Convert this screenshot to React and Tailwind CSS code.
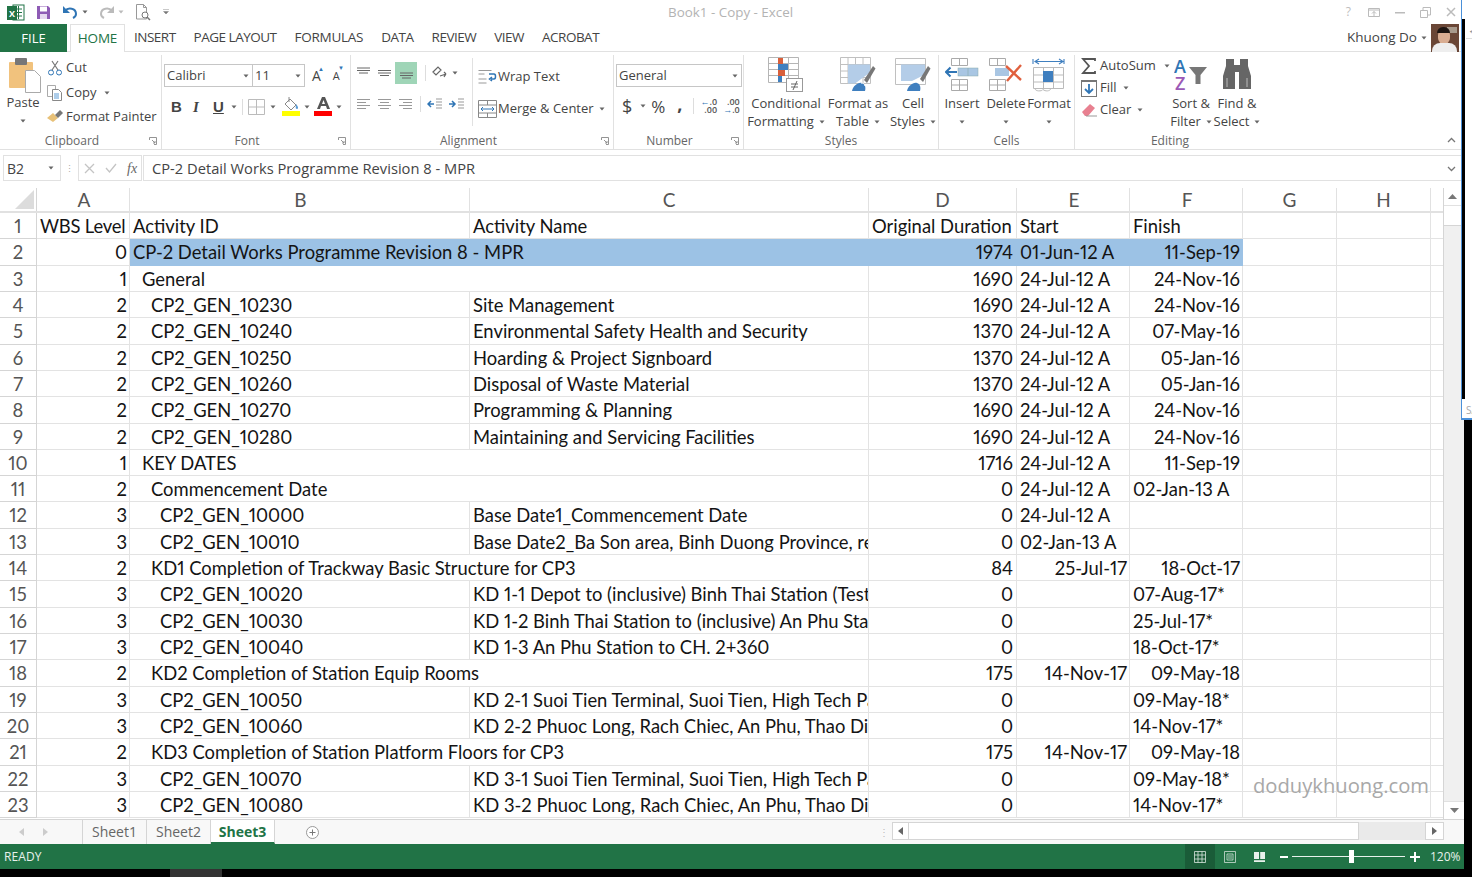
import React from "react";

const ui = { fontFamily: '"Open Sans","Noto Sans",sans-serif' };
const cellFont = { fontFamily: '"Lato","Noto Sans",sans-serif', fontVariantNumeric: "proportional-nums" };

const data = [
  [0, 0, "CP-2 Detail Works Programme Revision 8 - MPR", "", "1974", "01-Jun-12 A", "11-Sep-19"],
  [1, 1, "General", "", "1690", "24-Jul-12 A", "24-Nov-16"],
  [2, 2, "CP2_GEN_10230", "Site Management", "1690", "24-Jul-12 A", "24-Nov-16"],
  [2, 2, "CP2_GEN_10240", "Environmental Safety Health and Security", "1370", "24-Jul-12 A", "07-May-16"],
  [2, 2, "CP2_GEN_10250", "Hoarding & Project Signboard", "1370", "24-Jul-12 A", "05-Jan-16"],
  [2, 2, "CP2_GEN_10260", "Disposal of Waste Material", "1370", "24-Jul-12 A", "05-Jan-16"],
  [2, 2, "CP2_GEN_10270", "Programming & Planning", "1690", "24-Jul-12 A", "24-Nov-16"],
  [2, 2, "CP2_GEN_10280", "Maintaining and Servicing Facilities", "1690", "24-Jul-12 A", "24-Nov-16"],
  [1, 1, "KEY DATES", "", "1716", "24-Jul-12 A", "11-Sep-19"],
  [2, 2, "Commencement Date", "", "0", "24-Jul-12 A", "02-Jan-13 A"],
  [3, 3, "CP2_GEN_10000", "Base Date1_Commencement Date", "0", "24-Jul-12 A", ""],
  [3, 3, "CP2_GEN_10010", "Base Date2_Ba Son area, Binh Duong Province, re", "0", "02-Jan-13 A", ""],
  [2, 2, "KD1 Completion of Trackway Basic Structure for CP3", "", "84", "25-Jul-17", "18-Oct-17"],
  [3, 3, "CP2_GEN_10020", "KD 1-1 Depot to (inclusive) Binh Thai Station (Test", "0", "", "07-Aug-17*"],
  [3, 3, "CP2_GEN_10030", "KD 1-2 Binh Thai Station to (inclusive) An Phu Station", "0", "", "25-Jul-17*"],
  [3, 3, "CP2_GEN_10040", "KD 1-3 An Phu Station to CH. 2+360", "0", "", "18-Oct-17*"],
  [2, 2, "KD2 Completion of Station Equip Rooms", "", "175", "14-Nov-17", "09-May-18"],
  [3, 3, "CP2_GEN_10050", "KD 2-1 Suoi Tien Terminal, Suoi Tien, High Tech Park", "0", "", "09-May-18*"],
  [3, 3, "CP2_GEN_10060", "KD 2-2 Phuoc Long, Rach Chiec, An Phu, Thao Dien", "0", "", "14-Nov-17*"],
  [2, 2, "KD3 Completion of Station Platform Floors for CP3", "", "175", "14-Nov-17", "09-May-18"],
  [3, 3, "CP2_GEN_10070", "KD 3-1 Suoi Tien Terminal, Suoi Tien, High Tech Park", "0", "", "09-May-18*"],
  [3, 3, "CP2_GEN_10080", "KD 3-2 Phuoc Long, Rach Chiec, An Phu, Thao Dien", "0", "", "14-Nov-17*"],
];

const Caret = ({ className = "" }) => (
  <svg width="6" height="4" viewBox="0 0 6 4" className={className}><path d="M0.5 0.5h5L3 3.5z" fill="#666" /></svg>
);
const Launcher = () => (
  <svg width="8" height="8" viewBox="0 0 8 8" className="absolute right-[4px] bottom-[5px]"><path d="M0.5 3V.5H7.5V7.5H5M3 3l3 3M6 4v2H4" fill="none" stroke="#888" strokeWidth="0.9" /></svg>
);

function Group({ w, label, children, last, shift = "" }) {
  return (
    <div className={`relative flex flex-col shrink-0 h-[95px] mt-[3px] ${last ? "" : "border-r border-[#e1e1e1]"}`} style={{ width: w }}>
      <div className="relative flex-1 min-h-0">{children}</div>
      <div className={`text-center text-[12px] leading-[16px] text-[#666] pb-[1px] ${shift}`}>{label}</div>
    </div>
  );
}

function Big({ w, icon, l1, l2, caret = true }) {
  return (
    <div className="flex flex-col items-center shrink-0" style={{ width: w }}>
      <div className="h-[39px] flex items-center justify-center">{icon}</div>
      <div className="text-[13px] leading-[18px] text-[#444] whitespace-nowrap">{l1}</div>
      <div className="text-[13px] leading-[19px] text-[#444] whitespace-nowrap flex items-center gap-[5px] h-[19px]">{l2}{caret && <Caret />}</div>
    </div>
  );
}

const FormatTableIcon = () => (
  <svg width="36" height="35" viewBox="0 0 36 35">
    <path d="M.5 .5h30v26H.5zM.5 7.500h30M.5 14h30M.5 20.500h30M8 .5v26M15.500 .5v26M23 .5v26" fill="none" stroke="#c0c0c0" />
    <path d="M8 7.500h22v8L15 26.500H8z" fill="#b4cde8" />
    <path d="M24 23L33 9l2.500 2.500L27 26z" fill="#777" />
    <path d="M12 34c1-5 6-9 10-8 3 1 4 4 3 8z" fill="#3f7fbf" />
    <path d="M21 26c2 0 4 1 4 3" fill="none" stroke="#fff" />
  </svg>
);
const CellStyleIcon = () => (
  <svg width="36" height="34" viewBox="0 0 36 34">
    <path d="M.5 .5h30v26H.5zM.5 6.500h30" fill="none" stroke="#c0c0c0" />
    <path d="M6 6.500h24v10L17 23H6z" fill="#b4cde8" />
    <path d="M25 21L33 8l2.500 2.500L28 24z" fill="#777" />
    <path d="M12 33c1-5 6-9 10-8 3 1 4 4 3 8z" fill="#3f7fbf" />
  </svg>
);

const CondIcon = () => (
  <svg width="36" height="36" viewBox="0 0 36 36">
    <path d="M.5 .5h30v25h-30zM.5 6.500h30M.5 12.500h30M.5 18.500h30M10.500 .5v25M20.500 .5v25" fill="none" stroke="#b5b5b5" />
    <rect x="10" y="1" width="5" height="6" fill="#d9603c" />
    <rect x="10" y="7" width="10" height="6" fill="#3f7fbf" />
    <rect x="10" y="13" width="7" height="6" fill="#d9603c" />
    <rect x="10" y="19" width="4" height="6" fill="#3f7fbf" />
    <rect x="18.500" y="21.500" width="16" height="13" fill="#fff" stroke="#999" />
    <path d="M23 27h7M23 30h7M29 24l-4 9" stroke="#666" fill="none" />
  </svg>
);

const InsertIcon = () => (
  <svg width="34" height="34" viewBox="0 0 34 34">
    <path d="M6.500 .5h16v7h-16zM14.500 .5v7M6.500 21.500h16v11h-16zM6.500 27h16M14.500 21.500v11" fill="none" stroke="#aaa" />
    <rect x="13" y="10" width="20" height="8" fill="#a9c6e3" stroke="#8aa" strokeWidth=".5" />
    <path d="M23 10v8" stroke="#8aa" strokeWidth=".6" />
    <path d="M1 14h11M5.500 9.500L1 14l4.500 4.500" fill="none" stroke="#2f75b5" strokeWidth="2" />
  </svg>
);
const DeleteIcon = () => (
  <svg width="34" height="34" viewBox="0 0 34 34">
    <path d="M.5 .5h16v7h-16zM8.500 .5v7M.5 21.500h16v11h-16zM.5 27h16M8.500 21.500v11" fill="none" stroke="#aaa" />
    <rect x="6" y="10" width="14" height="8" fill="#a9c6e3" />
    <path d="M17 8l15 14M32 7L18 23" stroke="#e0603e" strokeWidth="2.400" fill="none" />
  </svg>
);
const FormatIcon = () => (
  <svg width="34" height="36" viewBox="0 0 34 36">
    <path d="M1 2v5M32 2v5M3 4.500h28M7 2L3 4.500 7 7M27 2l4 2.500L27 7" fill="none" stroke="#3f7fbf" strokeWidth="1.100" />
    <path d="M1.500 10.500h30v21h-30zM1.500 18h30M1.500 25h30M11.500 10.500v21M21.500 10.500v21" fill="none" stroke="#bbb" />
    <rect x="11" y="14" width="10" height="11" fill="#3f7fbf" />
    <path d="M3 31.500c0 3 7 3 8 1 2 2 7 2 8-1" fill="none" stroke="#bbb" />
  </svg>
);

function Row({ n, cells, selected }) {
  const [a, indent, b, c, d, e, f] = cells;
  const pad = ["pl-[3px]", "pl-[12px]", "pl-[21px]", "pl-[30px]"][indent];
  const eRight = e && !e.endsWith("A");
  const fLeft = f.endsWith("A") || f.endsWith("*");
  const sel = selected ? "bg-[#9cc2e5]" : "";
  const line = selected ? "border-[#9cc2e5]" : "border-[#e3e3e3]";
  return (
    <div className="flex h-[26.32px] text-[18.4px] leading-[26px] text-[#141414]" style={cellFont}>
      <div className="w-[37px] shrink-0 text-center text-[#555] border-r border-b border-[#d5d5d5] bg-[#fff]">{n}</div>
      <div className="w-[93px] shrink-0 text-right pr-[2px] border-r border-b border-[#e3e3e3]">{a}</div>
      <div className={`w-[340px] shrink-0 relative border-b whitespace-nowrap ${c ? "border-r" : ""} ${line} ${sel} ${pad}`}>
        <span className="relative z-10">{b}</span>
      </div>
      <div className={`w-[399px] shrink-0 overflow-hidden whitespace-nowrap pl-[3px] border-r border-b ${line} ${sel}`}>{c}</div>
      <div className={`w-[148px] shrink-0 text-right pr-[3px] border-r border-b ${line} ${sel}`}>{d}</div>
      <div className={`w-[113px] shrink-0 whitespace-nowrap border-r border-b ${line} ${sel} ${eRight ? "text-right pr-[2px]" : "pl-[3px]"}`}>{e}</div>
      <div className={`w-[113px] shrink-0 whitespace-nowrap border-r border-b ${line} ${sel} ${fLeft ? "pl-[3px]" : "text-right pr-[2px]"}`}>{f}</div>
      <div className="w-[94px] shrink-0 border-r border-b border-[#e3e3e3]" />
      <div className="w-[94px] shrink-0 border-r border-b border-[#e3e3e3]" />
      <div className="w-[12px] shrink-0 border-b border-[#e3e3e3]" />
    </div>
  );
}

function Header1() {
  return (
    <div className="flex h-[26.32px] text-[18.4px] leading-[26px] text-[#141414]" style={cellFont}>
      <div className="w-[37px] shrink-0 text-center text-[#555] border-r border-b border-[#d5d5d5]">1</div>
      <div className="w-[93px] shrink-0 pl-[3px] whitespace-nowrap tracking-[-0.2px] border-r border-b border-[#e3e3e3]">WBS Level</div>
      <div className="w-[340px] shrink-0 pl-[3px] border-r border-b border-[#e3e3e3]">Activity ID</div>
      <div className="w-[399px] shrink-0 pl-[3px] border-r border-b border-[#e3e3e3]">Activity Name</div>
      <div className="w-[148px] shrink-0 pl-[3px] whitespace-nowrap border-r border-b border-[#e3e3e3]">Original Duration</div>
      <div className="w-[113px] shrink-0 pl-[3px] border-r border-b border-[#e3e3e3]">Start</div>
      <div className="w-[113px] shrink-0 pl-[3px] border-r border-b border-[#e3e3e3]">Finish</div>
      <div className="w-[94px] shrink-0 border-r border-b border-[#e3e3e3]" />
      <div className="w-[94px] shrink-0 border-r border-b border-[#e3e3e3]" />
      <div className="w-[12px] shrink-0 border-b border-[#e3e3e3]" />
    </div>
  );
}

function ColHead({ w, t, nudge }) {
  return <div className={`shrink-0 text-center text-[19px] leading-[24px] text-[#555] border-r border-[#e1e1e1] ${nudge ? "pl-[2px]" : ""}`} style={{ width: w }}>{t}</div>;
}

function Lines({ kind }) {
  const ys = kind === "top" ? [1, 3.5, 6] : kind === "mid" ? [3.5, 6, 8.5] : [6, 8.5, 11];
  return (
    <svg width="15" height="13" viewBox="0 0 15 13" className="shrink-0">
      <path d={`M1 ${ys[0]}h13M1 ${ys[1]}h13M3 ${ys[2]}h9`} stroke="#666" />
    </svg>
  );
}
function HLines({ a }) {
  const x = a === "left" ? 1 : a === "center" ? 3 : 5;
  return (
    <svg width="15" height="13" viewBox="0 0 15 13" className="shrink-0">
      <path d={`M1 1.5h13M${x} 4.5h9M1 7.5h13M${x} 10.5h9`} stroke="#999" />
    </svg>
  );
}

export default function App() {
  return (
    <div className="w-[1472px] h-[877px] overflow-hidden bg-black relative" style={ui}>
      <div className="w-[1464px] h-[869px] bg-white flex flex-col">
        {/* title bar */}
        <div className="h-[24px] relative flex items-center shrink-0">
          <div className="flex items-center pl-[6px] gap-[11px]">
            <svg width="19" height="19" viewBox="0 0 19 19"><rect x="7" y="2" width="11" height="15" fill="#fff" stroke="#217346" /><path d="M9 6h7M9 9.500h7M9 13h7M12.500 3v13" stroke="#217346" /><rect x="1" y="3" width="10" height="14" fill="#217346" /><text x="3" y="14" fontSize="9" fontWeight="700" fill="#fff" fontFamily="Open Sans">X</text></svg>
            <svg width="15" height="15" viewBox="0 0 15 15"><path d="M1 1h11l2 2v11H1z" fill="#8e5bb5" /><rect x="4" y="1.500" width="7" height="5" fill="#fff" /><rect x="4" y="9" width="7" height="5" fill="#e6d8f0" /></svg>
            <div className="flex items-center gap-[3px]">
              <svg width="16" height="15" viewBox="0 0 16 15"><path d="M3 6c3-4 11-3 11 3 0 2-1 3-3 4" fill="none" stroke="#2f75b5" strokeWidth="2" /><path d="M1 1v7h7z" fill="#2f75b5" /></svg>
              <Caret className="ml-[1px]" />
            </div>
            <div className="flex items-center gap-[3px]">
              <svg width="16" height="15" viewBox="0 0 16 15"><path d="M13 6C10 2 2 3 2 9c0 2 1 3 3 4" fill="none" stroke="#bbb" strokeWidth="2" /><path d="M15 1v7H8z" fill="#bbb" /></svg>
              <svg width="6" height="4" viewBox="0 0 6 4"><path d="M.5.5h5L3 3.500z" fill="#bbb" /></svg>
            </div>
            <svg width="17" height="18" viewBox="0 0 17 18"><path d="M1.500 1.500h7l3 3V16h-10zM8.500 1.500v3h3" fill="none" stroke="#999" /><circle cx="10" cy="12" r="3" fill="#fff" stroke="#777" /><path d="M12 14l3 3" stroke="#777" strokeWidth="1.500" /></svg>
            <svg width="6" height="6" viewBox="0 0 6 6"><path d="M0 .5h6M.5 2.500h5L3 5z" fill="#777" stroke="#777" strokeWidth=".4" /></svg>
          </div>
          <div className="absolute left-[668px] top-[3px] text-[13.400px] leading-[18px] text-[#b3b3b3] whitespace-nowrap">Book1 - Copy - Excel</div>
          <div className="ml-auto flex items-center gap-[15px] pr-[8px]">
            <span className="text-[12px] leading-none text-[#bdbdbd] mr-[2px]">?</span>
            <svg width="12" height="9" viewBox="0 0 12 9"><path d="M.5.5h11v8H.5zM.5 2h11M6 8V3.500M4 5.500l2-2 2 2" fill="none" stroke="#bbb" /></svg>
            <svg width="10" height="3" viewBox="0 0 10 3"><rect y="1" width="10" height="1.500" fill="#bbb" /></svg>
            <svg width="11" height="11" viewBox="0 0 11 11"><path d="M.5 3.500h7v7h-7zM3 3V.5h7.500V8H8" fill="none" stroke="#bbb" /></svg>
            <svg width="10" height="10" viewBox="0 0 10 10"><path d="M1 1l8 8M9 1l-8 8" stroke="#bbb" strokeWidth="1.500" /></svg>
          </div>
        </div>
        {/* tabs */}
        <div className="h-[28px] flex items-center shrink-0 border-b border-[#e1e1e1] relative text-[13.500px] text-[#444]">
          <div className="w-[67px] h-[28px] bg-[#217346] text-white text-center leading-[28px] text-[13px] shrink-0">FILE</div>
          <div className="w-[55px] h-[28px] ml-[3px] border-x border-t border-[#e1e1e1] bg-white text-[#217346] text-center leading-[27px] z-10 shrink-0 whitespace-nowrap tracking-[-0.2px]">HOME</div>
          <div className="flex items-center gap-[18px] pl-[9px] tracking-[-0.5px] whitespace-nowrap">
            <span>INSERT</span><span>PAGE LAYOUT</span><span className="tracking-[-0.25px]">FORMULAS</span><span>DATA</span><span>REVIEW</span><span>VIEW</span><span>ACROBAT</span>
          </div>
          <div className="ml-auto flex items-center gap-[4px] text-[13.500px] h-full pr-[5px]">
            <span>Khuong Do</span><Caret />
            <div className="w-[28px] h-[28px] bg-[#6a4636] overflow-hidden relative">
              <div className="absolute left-[16px] top-[3px] w-[10px] h-[6px] bg-[#a89a8c]" />
              <div className="absolute left-[7px] top-[5px] w-[12px] h-[15px] rounded-full bg-[#d9ad92]" />
              <div className="absolute left-[6px] top-[3px] w-[13px] h-[6px] rounded-t-full bg-[#1d1512]" />
              <div className="absolute left-[1px] top-[19px] w-[25px] h-[10px] rounded-t-lg bg-[#eeeeee]" />
            </div>
          </div>
        </div>
        {/* ribbon */}
        <div className="h-[98px] flex shrink-0 border-b border-[#e1e1e1] relative text-[#444]">
          <Group w={162} shift="pr-[17px]" label={<span>Clipboard<Launcher /></span>}>
            <div className="flex h-full">
              <div className="w-[46px] flex flex-col items-center shrink-0">
                <svg width="33" height="36" viewBox="0 0 33 36" className="mt-[2px] ml-[3px]"><rect x="1" y="5" width="24" height="26" rx="1" fill="#f1c27d" /><rect x="7" y="1" width="12" height="7" rx="1" fill="#777" /><path d="M17.500 13.500h9l6 6v16h-15z" fill="#fff" stroke="#aaa" /></svg>
                <div className="text-[13px] leading-[18px]">Paste</div>
                <Caret className="mt-[8px]" />
              </div>
              <div className="flex flex-col text-[13px] pl-[1px]">
                <div className="h-[25px] flex items-center gap-[3px]">
                  <svg width="16" height="16" viewBox="0 0 16 16"><circle cx="4" cy="12.500" r="2.500" fill="none" stroke="#2f75b5" /><circle cx="12" cy="12.500" r="2.500" fill="none" stroke="#2f75b5" /><path d="M5 10L11 1M11 10L5 1" stroke="#777" strokeWidth="1.200" /></svg>
                  <span>Cut</span>
                </div>
                <div className="h-[25px] flex items-center gap-[3px]">
                  <svg width="16" height="16" viewBox="0 0 16 16"><path d="M.5.5h8v11h-8z" fill="#fff" stroke="#aaa" /><path d="M5.500 4.500h6l3 3v8h-9z" fill="#fff" stroke="#888" /><path d="M7 9h5M7 11h5M7 13h5" stroke="#5b9bd5" /></svg>
                  <span>Copy</span><Caret className="ml-[5px]" />
                </div>
                <div className="h-[24px] flex items-center gap-[3px]">
                  <svg width="16" height="14" viewBox="0 0 16 14"><path d="M0 8l6-5 5 5-5 4z" fill="#e8c178" /><path d="M8 5l5-5 3 3-5 5z" fill="#777" /></svg>
                  <span className="whitespace-nowrap">Format Painter</span>
                </div>
              </div>
            </div>
          </Group>
          <Group w={189} shift="pr-[18px]" label={<span>Font<Launcher /></span>}>
            <div className="pl-[2px] pt-[9px]">
              <div className="flex items-center">
                <div className="w-[89px] h-[23px] border border-[#c6c6c6] flex items-center justify-between px-[2px] text-[13px] shrink-0"><span>Calibri</span><Caret className="mr-[1px]" /></div>
                <div className="w-[52px] h-[23px] border border-l-0 border-[#c6c6c6] flex items-center justify-between px-[2px] text-[13px] shrink-0"><span>11</span><Caret className="mr-[1px]" /></div>
                <span className="ml-[7px] text-[14px] leading-none relative">A<span className="absolute -top-[3px] -right-[3px] text-[#2f75b5] text-[6px]">▲</span></span>
                <span className="ml-[12px] text-[11px] leading-none relative">A<span className="absolute -top-[5px] -right-[4px] text-[#2f75b5] text-[6px]">▼</span></span>
              </div>
              <div className="flex items-center mt-[10px] pl-[7px] h-[20px]">
                <span className="text-[15px] font-bold w-[22px]" style={{ fontFamily: '"Liberation Sans",sans-serif' }}>B</span>
                <span className="text-[15px] italic font-bold w-[20px]" style={{ fontFamily: '"Liberation Serif",serif' }}>I</span>
                <span className="text-[15px] font-bold underline w-[16px]" style={{ fontFamily: '"Liberation Sans",sans-serif' }}>U</span>
                <Caret className="ml-[2px]" />
                <div className="w-[1px] h-[16px] bg-[#ddd] ml-[5px] mr-[5px]" />
                <svg width="17" height="16" viewBox="0 0 17 16"><path d="M.5.5h16v15H.5zM8.500.5v15M.5 8h16" fill="none" stroke="#bbb" /></svg>
                <Caret className="ml-[5px] mr-[6px]" />
                <svg width="19" height="20" viewBox="0 0 19 20"><path d="M3 7l5-5 6 6-5 5zM7 0v5" fill="#fff" stroke="#888" /><path d="M14 7c2 2 3 5 1 5s-1-3-1-5" fill="#5b9bd5" /><rect y="14" width="18" height="5" fill="#ffff00" /></svg>
                <Caret className="ml-[3px] mr-[4px]" />
                <svg width="19" height="20" viewBox="0 0 19 20"><path d="M3 12L8 0h3l5 12h-3l-1-3H7l-1 3zM8 7h3L9.500 3z" fill="#555" fillRule="evenodd" /><rect y="14" width="18" height="5" fill="#ff0000" /></svg>
                <Caret className="ml-[3px]" />
              </div>
            </div>
          </Group>
          <Group w={263} shift="pr-[27px]" label={<span>Alignment<Launcher /></span>}>
            <div className="flex h-full">
              <div className="w-[121px] shrink-0 pl-[5px] pt-[7px]">
                <div className="flex items-center gap-[6px] h-[22px]">
                  <Lines kind="top" /><Lines kind="mid" />
                  <div className="w-[22px] h-[22px] bg-[#9fd5b7] flex items-center justify-center -ml-[3px] shrink-0"><Lines kind="bot" /></div>
                  <div className="w-[1px] h-[16px] bg-[#ddd] ml-[2px] shrink-0" />
                  <svg width="15" height="15" viewBox="0 0 15 15" className="shrink-0"><path d="M1 6l5-5 3 3-5 5zM8 10l6-2M14 8l-2-2M14 8l-2 3" fill="none" stroke="#666" strokeWidth="1.200" /></svg>
                  <Caret className="-ml-[1px]" />
                </div>
                <div className="flex items-center gap-[6px] h-[22px] mt-[9px]">
                  <HLines a="left" /><HLines a="center" /><HLines a="right" />
                  <div className="w-[1px] h-[16px] bg-[#ddd] ml-[1px] shrink-0" />
                  <svg width="16" height="12" viewBox="0 0 16 12" className="shrink-0"><path d="M1 6h6M4 3L1 6l3 3" fill="none" stroke="#2f75b5" strokeWidth="1.500" /><path d="M9 1h6M9 4h6M9 7h6M9 10h6" stroke="#999" /></svg>
                  <svg width="16" height="12" viewBox="0 0 16 12" className="shrink-0"><path d="M0 6h6M3 3l3 3-3 3" fill="none" stroke="#2f75b5" strokeWidth="1.500" /><path d="M9 1h6M9 4h6M9 7h6M9 10h6" stroke="#999" /></svg>
                </div>
              </div>
              <div className="w-[1px] h-[68px] bg-[#e1e1e1] mt-[3px] shrink-0" />
              <div className="flex flex-col pl-[5px] pt-[10px] text-[13px]">
                <div className="h-[24px] flex items-center whitespace-nowrap">
                  <svg width="20" height="16" viewBox="0 0 20 16"><path d="M.5 1.500h13M.5 5h6M.5 10h8M.5 14h8" stroke="#999" fill="none" /><path d="M11 5h5c2 0 2 5 0 5h-3M14 8l-2.500 2 2.500 2" fill="none" stroke="#2f75b5" strokeWidth="1.500" /></svg>
                  <span>Wrap Text</span>
                </div>
                <div className="h-[24px] mt-[8px] flex items-center whitespace-nowrap">
                  <svg width="20" height="18" viewBox="0 0 20 18"><path d="M.5.5h18v17H.5zM.5 5h18M.5 13h18M9.500.5V5M9.500 13v4" fill="none" stroke="#888" /><path d="M3 9h13M5 7L3 9l2 2M14 7l2 2-2 2" fill="none" stroke="#2f75b5" /></svg>
                  <span>Merge &amp; Center</span><Caret className="ml-[5px]" />
                </div>
              </div>
            </div>
          </Group>
          <Group w={130} shift="pr-[18px]" label={<span>Number<Launcher /></span>}>
            <div className="pl-[2px] pt-[9px]">
              <div className="w-[126px] h-[23px] border border-[#c6c6c6] flex items-center justify-between px-[2px] text-[13px]"><span>General</span><Caret className="mr-[1px]" /></div>
              <div className="flex items-center mt-[7px] pl-[6px] h-[24px]">
                <span className="text-[18px] leading-none">$</span><Caret className="ml-[8px]" />
                <span className="text-[17px] leading-none ml-[5px]">%</span>
                <span className="text-[18px] font-bold leading-none ml-[12px] -mt-[5px]">,</span>
                <div className="w-[1px] h-[16px] bg-[#ddd] ml-[10px]" />
                <div className="relative ml-[7px] text-[9px] leading-[8px] text-[#555] font-semibold text-right"><span className="text-[#2f75b5]">←</span>.0<br />.00</div>
                <div className="relative ml-[6px] text-[9px] leading-[8px] text-[#555] font-semibold text-right">.00<br /><span className="text-[#2f75b5]">→</span>.0</div>
              </div>
            </div>
          </Group>
          <Group w={195} label="Styles">
            <div className="flex">
              <Big w={84} icon={<CondIcon />} l1="Conditional" l2="Formatting" />
              <Big w={60} icon={<FormatTableIcon />} l1="Format as" l2="Table" />
              <Big w={50} icon={<CellStyleIcon />} l1="Cell" l2="Styles" />
            </div>
          </Group>
          <Group w={136} label="Cells">
            <div className="flex">
              <Big w={46} icon={<InsertIcon />} l1="Insert" l2="" />
              <Big w={42} icon={<DeleteIcon />} l1="Delete" l2="" />
              <Big w={44} icon={<FormatIcon />} l1="Format" l2="" />
            </div>
          </Group>
          <Group w={190} last label="Editing">
            <div className="flex h-full">
              <div className="flex flex-col text-[13px] pl-[6px] w-[95px] shrink-0 whitespace-nowrap">
                <div className="h-[22px] flex items-center gap-[3px]">
                  <svg width="16" height="16" viewBox="0 0 16 16"><path d="M14 3V1H2l6 7-6 7h12v-2" fill="none" stroke="#555" strokeWidth="1.800" /></svg>
                  <span>AutoSum</span><Caret className="ml-[5px]" />
                </div>
                <div className="h-[22px] flex items-center gap-[3px]">
                  <svg width="16" height="17" viewBox="0 0 16 17"><rect x=".5" y=".5" width="15" height="16" fill="#fff" stroke="#777" /><rect y="0" width="16" height="2" fill="#777" /><path d="M8 4v9M4 9l4 4 4-4" fill="none" stroke="#2f75b5" strokeWidth="1.800" /></svg>
                  <span>Fill</span><Caret className="ml-[3px]" />
                </div>
                <div className="h-[22px] flex items-center gap-[3px]">
                  <svg width="16" height="14" viewBox="0 0 16 14"><path d="M1 9l8-8 5 4-7 8H4z" fill="#e88090" /><path d="M5 13h11" stroke="#999" /></svg>
                  <span>Clear</span><Caret className="ml-[3px]" />
                </div>
              </div>
              <div className="flex">
                <Big w={42} icon={<svg width="34" height="32" viewBox="0 0 34 32"><text x="0" y="14" fontSize="18" fontWeight="600" fill="#2f75b5" fontFamily="Open Sans">A</text><text x="1" y="31" fontSize="18" fontWeight="600" fill="#9b59b6" fontFamily="Open Sans">Z</text><path d="M15 8h18l-6.500 8v9h-5v-9z" fill="#777" /></svg>} l1="Sort &" l2="Filter" />
                <Big w={50} icon={<svg width="34" height="31" viewBox="0 0 34 31"><path d="M6 0h8v6h6V0h8v7l3 10v13H19V13h-4v17H3V17l3-10z" fill="#666" /><path d="M7 19v9M27 19v9" stroke="#bbb" /></svg>} l1="Find &" l2="Select" />
              </div>
            </div>
          </Group>
          <svg width="9" height="6" viewBox="0 0 9 6" className="absolute right-[8px] bottom-[6px]"><path d="M1 5l3.500-3.500L8 5" fill="none" stroke="#777" strokeWidth="1.300" /></svg>
        </div>
        {/* formula bar */}
        <div className="h-[31px] shrink-0 flex items-center pl-[3px] pt-[5px] bg-white">
          <div className="w-[58px] h-[26px] border border-[#e1e1e1] flex items-center justify-between px-[3px] text-[14px] text-[#444] shrink-0"><span>B2</span><Caret className="mr-[3px]" /></div>
          <span className="w-[17px] text-center text-[#aaa] text-[9px] leading-none shrink-0">⋮</span>
          <div className="w-[64px] h-[26px] border border-[#e1e1e1] flex items-center gap-[10px] pl-[5px] shrink-0">
            <svg width="11" height="11" viewBox="0 0 11 11" className="shrink-0"><path d="M1 1l9 9M10 1l-9 9" stroke="#c4c4c4" strokeWidth="1.300" /></svg>
            <svg width="12" height="10" viewBox="0 0 12 10" className="shrink-0"><path d="M1 5l3.500 4L11 1" fill="none" stroke="#c4c4c4" strokeWidth="1.300" /></svg>
            <span className="text-[14px] italic text-[#666]" style={{ fontFamily: '"Liberation Serif",serif' }}>fx</span>
          </div>
          <div className="flex-1 h-[26px] border-y border-l border-[#e1e1e1] flex items-center pl-[8px] text-[14.700px] text-[#444] relative ml-[1px]">
            CP-2 Detail Works Programme Revision 8 - MPR
            <svg width="9" height="6" viewBox="0 0 9 6" className="absolute right-[8px] top-[10px]"><path d="M1 1l3.500 3.500L8 1" fill="none" stroke="#777" strokeWidth="1.300" /></svg>
          </div>
        </div>
        {/* grid */}
        <div className="flex-1 min-h-0 flex pt-[7px] relative">
          <div className="w-[1443px] shrink-0 overflow-hidden">
            <div className="flex h-[25px] border-b-2 border-[#e1e1e1]" style={cellFont}>
              <div className="w-[37px] shrink-0 border-r border-[#d5d5d5] flex items-end justify-end pr-[2px] pb-[2px]">
                <svg width="19" height="19" viewBox="0 0 19 19"><path d="M19 0v19H0z" fill="#dcdcdc" /></svg>
              </div>
              <ColHead w={93} t="A" nudge /><ColHead w={340} t="B" nudge /><ColHead w={399} t="C" /><ColHead w={148} t="D" /><ColHead w={113} t="E" nudge /><ColHead w={113} t="F" nudge /><ColHead w={94} t="G" /><ColHead w={94} t="H" />
            </div>
            <Header1 />
            {data.map((r, i) => <Row key={i} n={i + 2} cells={r} selected={i === 0} />)}
          </div>
          <div className="w-[21px] shrink-0 border-l border-[#d5d5d5] flex flex-col h-full pb-[1px]">
            <div className="h-[18px] border-b border-[#e1e1e1] flex items-center justify-center pr-[3px]"><svg width="9" height="5" viewBox="0 0 9 5"><path d="M0 5l4.500-5L9 5z" fill="#777" /></svg></div>
            <div className="h-[20px] border-b border-[#d5d5d5] bg-white" />
            <div className="flex-1 bg-[#f0f0f0]" />
            <div className="h-[17px] border-t border-[#e1e1e1] flex items-center justify-center"><svg width="9" height="5" viewBox="0 0 9 5"><path d="M0 0l4.500 5L9 0z" fill="#777" /></svg></div>
          </div>
          <div className="absolute left-[1253px] top-[589px] text-[20.200px] leading-[30px] text-[#a8a8a8] whitespace-nowrap z-20">doduykhuong.com</div>
        </div>
        {/* sheet tabs */}
        <div className="h-[25px] shrink-0 flex items-stretch border-t border-[#d5d5d5] bg-[#f8f8f8] text-[14px] text-[#666]">
          <div className="w-[83px] flex items-center gap-[19px] pl-[19px] border-r border-[#d5d5d5] shrink-0">
            <svg width="5" height="8" viewBox="0 0 5 8"><path d="M5 0v8L0 4z" fill="#ccc" /></svg>
            <svg width="5" height="8" viewBox="0 0 5 8"><path d="M0 0v8l5-4z" fill="#ccc" /></svg>
          </div>
          <div className="w-[64px] text-center leading-[24px] border-r border-[#d5d5d5] shrink-0">Sheet1</div>
          <div className="w-[64px] text-center leading-[24px] border-r border-[#d5d5d5] shrink-0">Sheet2</div>
          <div className="w-[64px] text-center leading-[24px] font-bold text-[#217346] bg-white border-r border-[#d5d5d5] border-b-2 border-b-[#217346] shrink-0">Sheet3</div>
          <div className="w-[75px] flex items-center justify-center shrink-0">
            <svg width="13" height="13" viewBox="0 0 13 13"><circle cx="6.500" cy="6.500" r="6" fill="#fff" stroke="#999" /><path d="M6.500 3.500v6M3.500 6.500h6" stroke="#777" /></svg>
          </div>
          <div className="w-[525px] shrink-0 bg-[#f8f8f8]" />
          <div className="flex items-center text-[#bbb] text-[10px] w-[17px] justify-center shrink-0">⋮</div>
          <div className="flex-1 flex items-stretch pt-[2px] pb-[4px] pr-[20px]">
            <div className="w-[17px] border border-[#d5d5d5] bg-white flex items-center justify-center shrink-0"><svg width="5" height="8" viewBox="0 0 5 8"><path d="M5 0v8L0 4z" fill="#666" /></svg></div>
            <div className="w-[450px] border-y border-r border-[#d5d5d5] bg-white shrink-0" />
            <div className="flex-1 bg-[#eaeaea]" />
            <div className="w-[19px] border border-[#d5d5d5] bg-white flex items-center justify-center shrink-0"><svg width="5" height="8" viewBox="0 0 5 8"><path d="M0 0v8l5-4z" fill="#666" /></svg></div>
          </div>
        </div>
        {/* status bar */}
        <div className="h-[25px] shrink-0 bg-[#217346] text-[#e8f1ec] flex items-center pl-[4px] text-[12px]">
          <span className="tracking-[0.1px]">READY</span>
          <div className="ml-auto flex items-center h-full">
            <div className="w-[30px] h-full bg-[#1a5c38] flex items-center justify-center">
              <svg width="12" height="12" viewBox="0 0 12 12"><path d="M.5.5h11v11H.5zM4 .5v11M8 .5v11M.5 4h11M.5 8h11" fill="none" stroke="#d8e6de" strokeWidth=".8" /></svg>
            </div>
            <div className="w-[30px] flex justify-center">
              <svg width="12" height="12" viewBox="0 0 12 12"><path d="M.5.5h11v11H.5zM3 3h6v6H3zM4 5h4M4 7h4" fill="none" stroke="#cfe0d6" strokeWidth=".8" /></svg>
            </div>
            <div className="w-[28px] flex justify-center">
              <svg width="11" height="10" viewBox="0 0 11 10"><rect width="11" height="10" fill="#e8f1ec" /><rect x="5" width="1.200" height="7" fill="#217346" /><rect y="7" width="11" height="1.200" fill="#217346" /></svg>
            </div>
            <span className="w-[8px] h-[2px] bg-white ml-[7px]" />
            <div className="relative w-[113px] h-[1px] bg-[#e8f1ec] ml-[4px]">
              <div className="absolute left-[57px] -top-[6px] w-[5px] h-[13px] bg-white" />
            </div>
            <svg width="10" height="10" viewBox="0 0 10 10" className="ml-[5px]"><path d="M5 0v10M0 5h10" stroke="#fff" strokeWidth="2" /></svg>
            <span className="ml-[10px] pr-[5px] w-[34px] whitespace-nowrap">120%</span>
          </div>
        </div>
      </div>
      {/* second window peeking in at the right edge */}
      <div className="absolute left-[1461px] top-0 w-[11px] h-[420px] bg-white border-l border-b-2 border-[#4a90d9] overflow-hidden text-[#888]">
        <div className="absolute left-0 top-[19px] w-[3px] h-[380px] bg-black" />
        <div className="absolute left-[5px] top-[21px] text-[13px] leading-[16px]">←</div>
        <div className="absolute left-[4px] top-[38px] w-[8px] h-[1px] bg-[#ddd]" />
        <div className="absolute left-[4px] top-[404px] text-[10px] leading-[12px] text-[#aaa]">SA</div>
      </div>
      <div className="absolute left-[170px] top-[869px] w-[52px] h-[8px] bg-[#333]" />
    </div>
  );
}
